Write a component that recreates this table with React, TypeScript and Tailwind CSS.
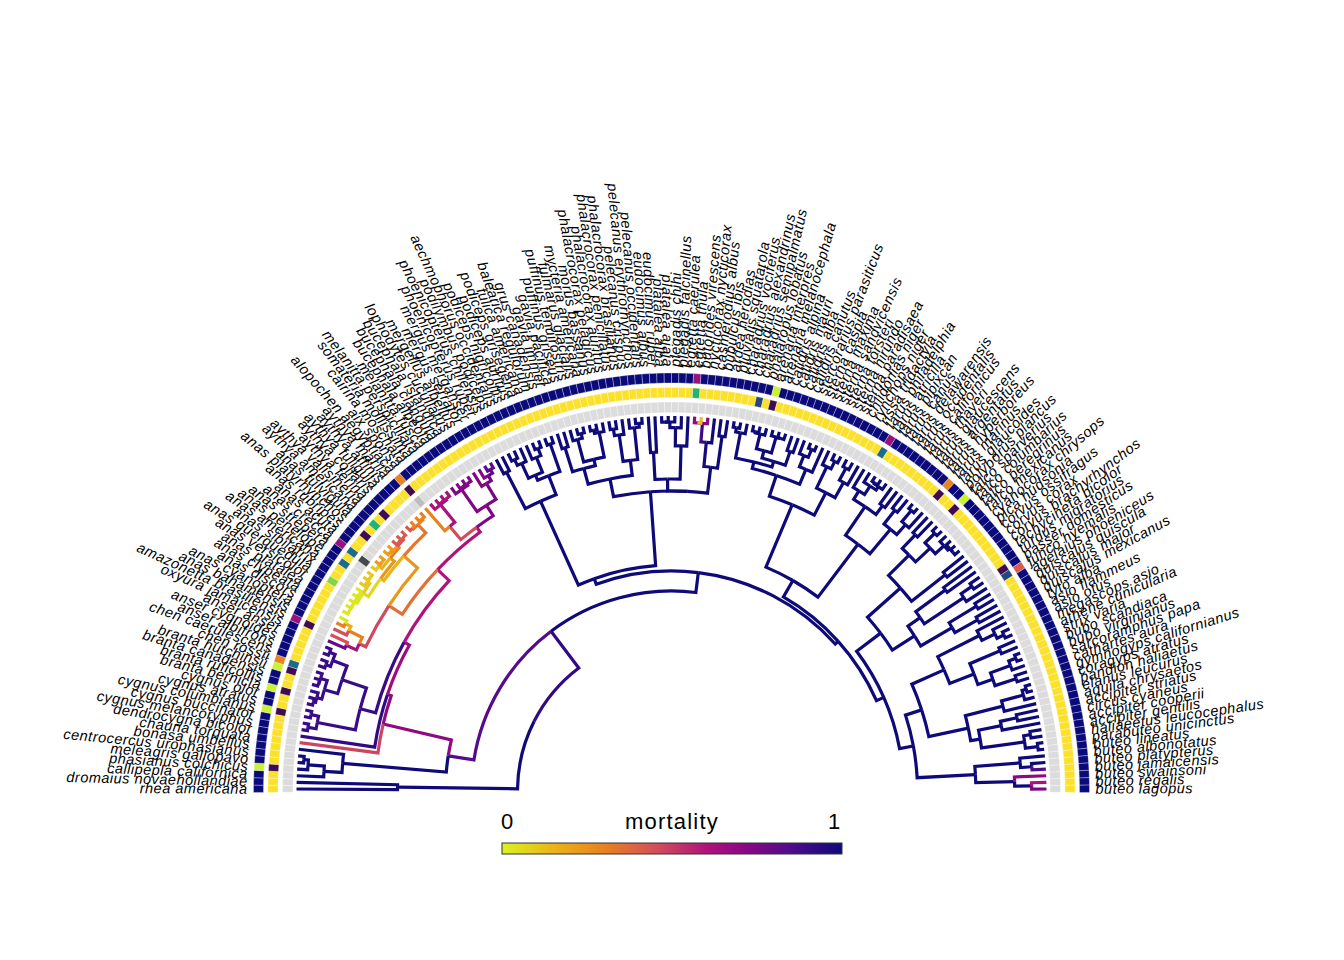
import React from "react";

// Fan tree of bird species with three trait rings and a mortality colour bar.
const NAMES = [
  "rhea americana", "dromaius novaehollandiae", "callipepla californica", "phasianus colchicus",
  "meleagris gallopavo", "centrocercus urophasianus", "bonasa umbellus", "chauna torquata",
  "dendrocygna bicolor", "cygnus melancoryphus", "cygnus buccinator", "cygnus columbianus",
  "cygnus atratus", "cygnus olor", "branta bernicla", "branta ruficollis", "branta canadensis",
  "branta hutchinsii", "chen rossii", "chen caerulescens", "anser albifrons", "anser cygnoides",
  "anser anser", "oxyura jamaicensis", "amazonetta brasiliensis", "anas bahamensis",
  "anas cyanoptera", "anas discors", "anas clypeata", "anas platalea", "anas versicolor",
  "anas querquedula", "anas sibilatrix", "anas americana", "anas penelope", "anas strepera",
  "anas crecca", "anas acuta", "anas rubripes", "anas platyrhynchos", "anas fulvigula",
  "aythya americana", "aythya valisineria", "aythya ferina", "aythya collaris", "aythya fuligula",
  "aythya affinis", "aythya marila", "alopochen aegyptiaca", "aix sponsa", "cairina moschata",
  "somateria mollissima", "melanitta perspicillata", "melanitta fusca", "bucephala albeola",
  "bucephala clangula", "bucephala islandica", "lophodytes cucullatus", "mergellus albellus",
  "mergus serrator", "mergus merganser", "phoenicopterus ruber", "phoenicopterus chilensis",
  "podilymbus podiceps", "aechmophorus occidentalis", "podiceps nigricollis", "podiceps auritus",
  "podiceps grisegena", "fulica americana", "balearica regulorum", "grus canadensis",
  "gavia immer", "gavia pacifica", "puffinus griseus", "puffinus tenuirostris",
  "fulmarus glacialis", "mycteria americana", "morus bassanus", "phalacrocorax pelagicus",
  "phalacrocorax auritus", "phalacrocorax penicillatus", "phalacrocorax brasilianus",
  "pelecanus crispus", "pelecanus erythrorhynchos", "pelecanus occidentalis", "eudocimus albus",
  "eudocimus ruber", "platalea alba", "platalea ajaja", "plegadis chihi", "plegadis falcinellus",
  "egretta caerulea", "egretta thula", "butorides virescens", "nycticorax nycticorax",
  "casmerodius albus", "bubulcus ibis", "ardea herodias", "pluvialis squatarola",
  "charadrius vociferus", "charadrius alexandrinus", "charadrius semipalmatus",
  "phalaropus lobatus", "arenaria interpres", "arenaria melanocephala", "calidris alpina",
  "calidris mauri", "calidris alba", "calidris canutus", "stercorarius parasiticus",
  "sterna caspia", "sterna maxima", "sterna sandvicensis", "sterna forsteri", "sterna hirundo",
  "sterna paradisaea", "chlidonias niger", "rynchops niger", "rissa tridactyla",
  "larus philadelphia", "larus atricilla", "larus pipixcan", "larus canus", "larus delawarensis",
  "larus occidentalis", "larus californicus", "larus thayeri", "larus glaucescens",
  "larus argentatus", "larus hyperboreus", "larus marinus", "larus glaucoides",
  "polyborus plancus", "falco sparverius", "falco columbarius", "falco peregrinus",
  "falco mexicanus", "cyanocorax chrysops", "pica hudsonia", "corvus ossifragus", "corvus corax",
  "corvus brachyrhynchos", "tachycineta bicolor", "turdus migratorius", "passer domesticus",
  "junco hyemalis", "agelaius phoeniceus", "quiscalus quiscula", "quiscalus major",
  "quiscalus mexicanus", "tyto alba", "asio flammeus", "asio otus", "megascops asio",
  "athene cunicularia", "strix varia", "bubo scandiaca", "bubo virginianus", "sarcoramphus papa",
  "cathartes aura", "gymnogyps californianus", "coragyps atratus", "pandion haliaetus",
  "elanus leucurus", "aquila chrysaetos", "accipiter striatus", "circus cyaneus",
  "accipiter cooperii", "accipiter gentilis", "haliaeetus leucocephalus", "parabuteo unicinctus",
  "buteo lineatus", "buteo albonotatus", "buteo platypterus", "buteo jamaicensis",
  "buteo swainsoni", "buteo regalis", "buteo lagopus",
];

const CX = 671.5;
const CY = 791;
const RT = 375;
const N = NAMES.length;
const STEP = 180.4 / N;
const angOf = (i: number) => 180.2 - (i + 0.5) * STEP;

function toXY(r: number, a: number): [number, number] {
  const t = (a * Math.PI) / 180;
  return [CX + r * Math.cos(t), CY - r * Math.sin(t)];
}
const f = (n: number) => n.toFixed(2);

// mortality gradient (0 = lime, 1 = navy)
const STOPS: [number, [number, number, number]][] = [
  [0, [216, 243, 34]],
  [0.15, [236, 180, 24]],
  [0.3, [232, 130, 30]],
  [0.45, [212, 80, 90]],
  [0.6, [176, 20, 122]],
  [0.72, [138, 6, 132]],
  [0.85, [79, 12, 140]],
  [1, [14, 10, 122]],
];
function col(m: number): string {
  const v = Math.max(0, Math.min(1, m));
  for (let k = 1; k < STOPS.length; k++) {
    const [p1, c1] = STOPS[k];
    const [p0, c0] = STOPS[k - 1];
    if (v <= p1) {
      const t = (v - p0) / (p1 - p0);
      const c = c0.map((x, j) => Math.round(x + (c1[j] - x) * t));
      return `rgb(${c[0]},${c[1]},${c[2]})`;
    }
  }
  return "rgb(14,10,122)";
}

// tip mortality values
const MORT: number[] = NAMES.map(() => 1);
const setM = (lo: number, hi: number, v: number) => {
  for (let i = lo; i <= hi; i++) MORT[i] = v;
};
setM(7, 7, 0.48);
setM(8, 8, 0.92);
setM(9, 22, 0.9);
setM(23, 23, 0.8);
setM(24, 25, 0.45);
setM(26, 26, 0.3);
setM(27, 32, 0.03);
setM(33, 36, 0.1);
setM(37, 40, 0.22);
setM(41, 44, 0.42);
setM(45, 48, 0.3);
setM(49, 52, 0.62);
setM(53, 58, 0.74);
setM(59, 60, 0.82);
setM(92, 92, 0.7);
setM(93, 93, 0.12);
setM(94, 94, 0.72);
setM(174, 174, 0.85);
setM(175, 175, 0.7);
setM(176, 176, 0.62);
setM(177, 177, 0.76);

type TNode = { r: number; a: number; m: number; kids: TNode[] };

const leaf = (i: number): TNode => ({ r: RT, a: angOf(i), m: MORT[i], kids: [] });
function node(r: number, kids: TNode[], m?: number, a?: number): TNode {
  const aa = a ?? kids.reduce((s, k) => s + k.a, 0) / kids.length;
  const mm = m ?? kids.reduce((s, k) => s + k.m, 0) / kids.length;
  return { r, a: aa, m: mm, kids };
}

function rng(seed: number) {
  let s = seed >>> 0;
  return () => {
    s = (s + 0x6d2b79f5) >>> 0;
    let t = s;
    t = Math.imul(t ^ (t >>> 15), t | 1);
    t ^= t + Math.imul(t ^ (t >>> 7), t | 61);
    return ((t ^ (t >>> 14)) >>> 0) / 4294967296;
  };
}
const rnd = rng(20240611);

// random ladder-ish subtree over tips lo..hi, rooted at radius r.
// pull moves inner edge colours toward navy (1 = all navy).
function auto(lo: number, hi: number, r: number, pull = 0): TNode {
  if (lo === hi) return leaf(lo);
  const n = hi - lo + 1;
  const k = lo + Math.min(n - 2, Math.floor((0.15 + 0.7 * rnd()) * (n - 1)));
  const sub = (a: number, b: number) => {
    if (a === b) return leaf(a);
    const s = b - a + 1;
    const fr = s > 4 ? 0.12 + 0.42 * rnd() : 0.35 + 0.45 * rnd();
    return auto(a, b, Math.min(RT - 6, r + (RT - r) * fr), pull);
  };
  const kids = [sub(lo, k), sub(k + 1, hi)];
  const mean = (kids[0].m + kids[1].m) / 2;
  return node(r, kids, 1 - (1 - mean) * (1 - pull));
}

const TREE = node(
  154,
  [
    node(274, [leaf(0), leaf(1)]),
    node(
      200,
      [
        node(
          226,
          [
            auto(2, 6, 330),
            node(
              296,
              [
                leaf(7),
                node(
                  300,
                  [
                    leaf(8),
                    node(
                      306,
                      [auto(9, 22, 322), node(322, [auto(23, 47, 338), auto(48, 60, 328)], 0.6)],
                      0.66
                    ),
                  ],
                  0.7
                ),
              ],
              0.7
            ),
          ],
          0.84
        ),
        node(
          220,
          [
            node(
              226,
              [auto(61, 70, 318, 0.5), node(300, [auto(71, 84, 318, 1), auto(85, 97, 300, 0.6)], 1)],
              1,
              110
            ),
            node(
              224,
              [auto(98, 130, 243, 1), node(232, [auto(131, 149, 262, 1), auto(150, 177, 246, 1)], 1)],
              1
            ),
          ],
          1,
          83
        ),
      ],
      0.92
    ),
  ],
  1
);

type Edge = { d: string; c: string };
const EDGES: Edge[] = [];
(function walk(p: TNode) {
  for (const c of p.kids) {
    const [x0, y0] = toXY(p.r, p.a);
    const [x1, y1] = toXY(p.r, c.a);
    const [x2, y2] = toXY(c.r, c.a);
    const sweep = c.a > p.a ? 0 : 1;
    EDGES.push({
      d: `M${f(x0)} ${f(y0)}A${p.r} ${p.r} 0 0 ${sweep} ${f(x1)} ${f(y1)}L${f(x2)} ${f(y2)}`,
      c: col(c.m),
    });
    walk(c);
  }
})(TREE);

function wedge(r1: number, r2: number, a1: number, a2: number) {
  const [x1, y1] = toXY(r2, a1);
  const [x2, y2] = toXY(r2, a2);
  const [x3, y3] = toXY(r1, a2);
  const [x4, y4] = toXY(r1, a1);
  return `M${f(x1)} ${f(y1)}A${r2} ${r2} 0 0 1 ${f(x2)} ${f(y2)}L${f(x3)} ${f(y3)}A${r1} ${r1} 0 0 0 ${f(x4)} ${f(y4)}Z`;
}

const NAVY = "#0b0a7a";
const LIME = "#c9f331";
const ORANGE = "#e58420";
const MAGENTA = "#96127c";
const RED = "#d65a50";
const DP = "#3f0c4f";
const TEAL = "#1d6a8a";
const GREEN = "#23b26f";
const LGREEN = "#84d44b";
const DBLUE = "#26467d";

const OUTER: Record<number, string> = {
  3: LIME, 11: LIME, 14: LIME, 17: LIME, 18: ORANGE, 24: MAGENTA, 36: MAGENTA, 48: ORANGE,
  92: MAGENTA, 103: LIME, 120: MAGENTA, 130: ORANGE, 133: LIME, 145: RED,
};
const MIDDLE: Record<number, string> = {
  3: DP, 11: DP, 14: DP, 17: DP, 18: TEAL, 24: DP, 31: LGREEN, 34: TEAL, 36: TEAL, 39: DP,
  41: GREEN, 43: DP, 48: DP, 92: GREEN, 101: DBLUE, 103: DP, 120: TEAL, 130: DP, 133: DP,
  144: DP, 145: DBLUE,
};
const INNER: Record<number, string> = { 36: "#474747", 48: "#bdbdbd" };

const RINGS: { r1: number; r2: number; base: string; ex: Record<number, string> }[] = [
  { r1: 378.5, r2: 389, base: "#dcdcdc", ex: INNER },
  { r1: 393.5, r2: 403.5, base: "#fce12c", ex: MIDDLE },
  { r1: 408, r2: 418, base: NAVY, ex: OUTER },
];

export default function App() {
  return (
    <div className="w-[1344px] h-[960px] bg-white">
      <svg width={1344} height={960} viewBox="0 0 1344 960" className="block">
        <defs>
          <linearGradient id="mort" x1="0" x2="1" y1="0" y2="0">
            {STOPS.map(([p, c]) => (
              <stop key={p} offset={p} stopColor={`rgb(${c[0]},${c[1]},${c[2]})`} />
            ))}
          </linearGradient>
        </defs>

        {/* branches */}
        <g fill="none" strokeWidth={3.2} strokeLinejoin="miter" strokeLinecap="butt">
          {EDGES.map((e, i) => (
            <path key={i} d={e.d} stroke={e.c} />
          ))}
        </g>

        {/* trait rings */}
        {RINGS.map((ring, k) => (
          <g key={k} stroke="#ffffff" strokeWidth={0.5} strokeOpacity={0.6}>
            {NAMES.map((_, i) => {
              const a = angOf(i);
              return (
                <path
                  key={i}
                  d={wedge(ring.r1, ring.r2, a + STEP / 2, a - STEP / 2)}
                  fill={ring.ex[i] ?? ring.base}
                />
              );
            })}
          </g>
        ))}

        {/* tip labels */}
        <g
          fontFamily='"Liberation Sans", Arial, sans-serif'
          fontStyle="italic"
          fontSize={14.5}
          letterSpacing={0.5}
          fill="#000000"
        >
          {NAMES.map((name, i) => {
            const a = angOf(i);
            const [x, y] = toXY(424, a);
            const left = a > 90;
            return (
              <text
                key={i}
                x={f(x)}
                y={f(y)}
                transform={`rotate(${f(left ? 180 - a : -a)} ${f(x)} ${f(y)})`}
                textAnchor={left ? "end" : "start"}
                dominantBaseline="central"
              >
                {name}
              </text>
            );
          })}
        </g>

        {/* legend */}
        <g fontFamily='"Liberation Sans", Arial, sans-serif' fontSize={22} fill="#000000">
          <text x={507} y={829} textAnchor="middle">
            0
          </text>
          <text x={672} y={829} textAnchor="middle" letterSpacing={1.2}>
            mortality
          </text>
          <text x={834} y={829} textAnchor="middle">
            1
          </text>
        </g>
        <rect x={502} y={843} width={340} height={11} fill="url(#mort)" stroke="#333333" strokeWidth={1} />
      </svg>
    </div>
  );
}
